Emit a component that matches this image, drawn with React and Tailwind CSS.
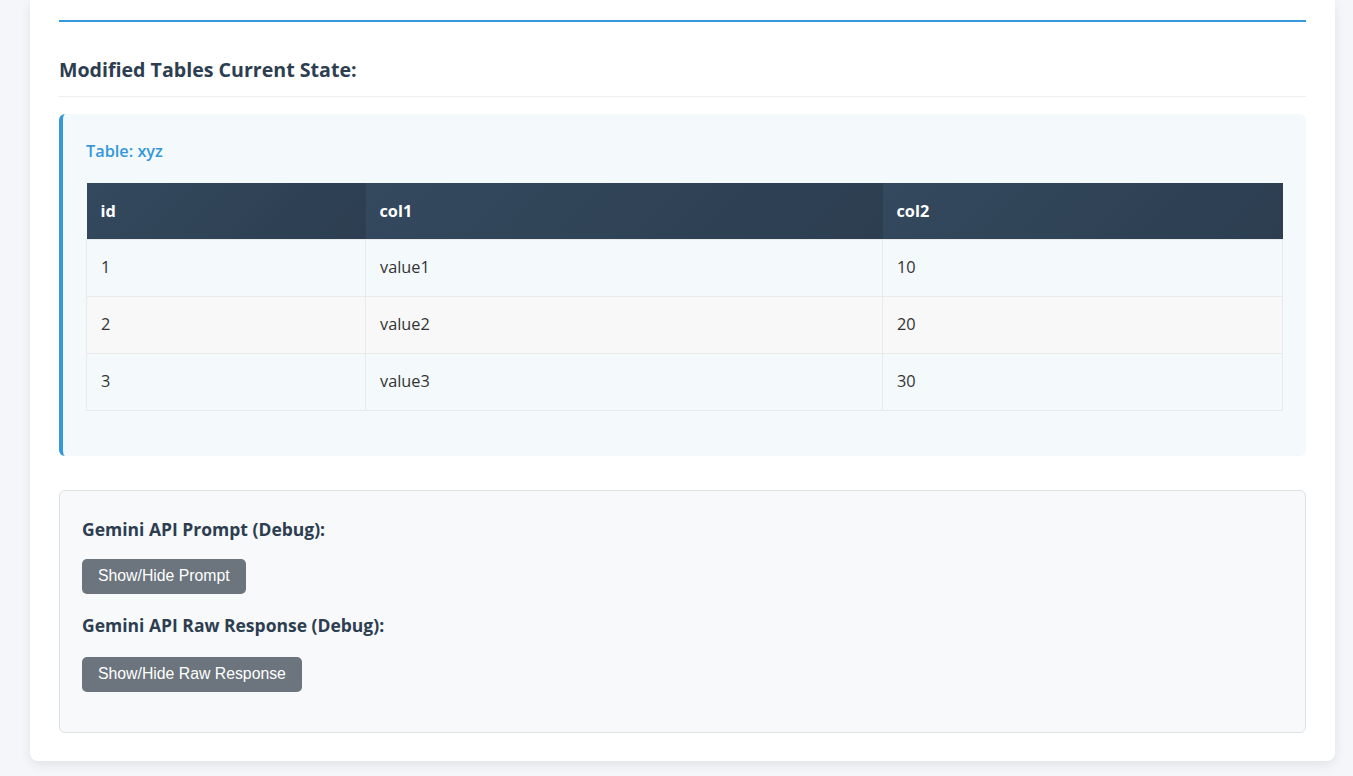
const rows = [
  { id: 1, col1: "value1", col2: 10 },
  { id: 2, col1: "value2", col2: 20 },
  { id: 3, col1: "value3", col2: 30 },
];

export default function App() {
  return (
    <div className="min-h-[776px] bg-[#f4f6f9] pl-[30px] pr-[18px] pb-[16px] font-['Open_Sans',sans-serif] text-[#333]">
      <div className="bg-white rounded-b-lg shadow-[0_4px_12px_rgba(0,0,0,0.08)] px-[29px] pt-[20px] pb-[28px]">
        <div className="h-[2px] bg-[#3498db]" />

        <h3 className="mt-[35px] pb-[13px] border-b border-[#eee] text-[19.6px] leading-[26px] font-bold text-[#2c3e50]">
          Modified Tables Current State:
        </h3>

        <div className="mt-[17px] bg-[#f4f9fc] border-l-4 border-[#3498db] rounded-md pl-[23px] pr-[23px] pt-[26px] pb-[45px]">
          <h4 className="text-[16.3px] leading-[22px] font-semibold text-[#3498db]">Table: xyz</h4>
          <table className="mt-[21px] w-full border-collapse text-[16.3px]">
            <thead>
              <tr className="h-[56px]">
                <th className="w-[279px] text-left font-bold text-white px-[14px] bg-[linear-gradient(135deg,#34495e,#2c3e50)]">id</th>
                <th className="w-[517px] text-left font-bold text-white px-[14px] bg-[linear-gradient(135deg,#34495e,#2c3e50)]">col1</th>
                <th className="text-left font-bold text-white px-[14px] bg-[linear-gradient(135deg,#34495e,#2c3e50)]">col2</th>
              </tr>
            </thead>
            <tbody>
              {rows.map((r, i) => (
                <tr key={r.id} className={"h-[57px] " + (i % 2 === 1 ? "bg-[#f8f8f8]" : "bg-[#f4f9fc]")}>
                  <td className="border border-[#e8eaec] px-[14px] text-[#333]">{r.id}</td>
                  <td className="border border-[#e8eaec] px-[14px] text-[#333]">{r.col1}</td>
                  <td className="border border-[#e8eaec] px-[14px] text-[#333]">{r.col2}</td>
                </tr>
              ))}
            </tbody>
          </table>
        </div>

        <div className="mt-[34px] bg-[#f8f9fa] border border-[#dee2e6] rounded-md pl-[22px] pr-[23px] pt-[26px] pb-[40px]">
          <h4 className="text-[17.5px] leading-[24px] font-bold text-[#2c3e50]">Gemini API Prompt (Debug):</h4>
          <button className="mt-[18px] h-[35px] px-[16px] bg-[#6c757d] text-white rounded-[5px] text-[15.8px] font-['Liberation_Sans',Arial,sans-serif]">
            Show/Hide Prompt
          </button>
          <h4 className="mt-[19px] text-[17.5px] leading-[24px] font-bold text-[#2c3e50]">Gemini API Raw Response (Debug):</h4>
          <button className="block mt-[20px] h-[35px] px-[16px] bg-[#6c757d] text-white rounded-[5px] text-[15.8px] font-['Liberation_Sans',Arial,sans-serif]">
            Show/Hide Raw Response
          </button>
        </div>
      </div>
    </div>
  );
}
